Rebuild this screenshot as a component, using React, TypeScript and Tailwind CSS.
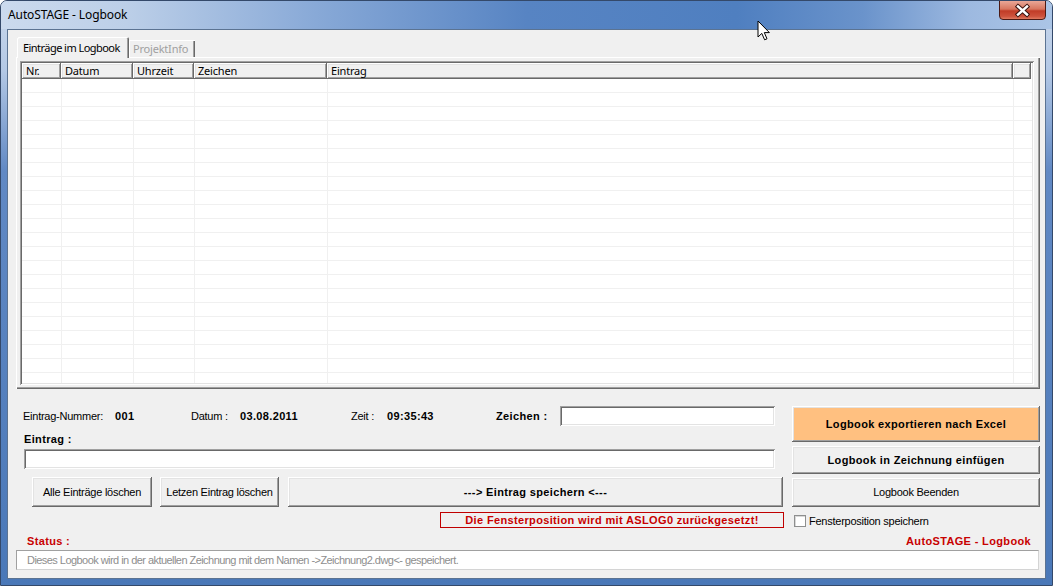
import React from 'react';

// classic 3D borders
const raised =
  'shadow-[inset_-1px_-1px_0_#696969,inset_1px_1px_0_#ffffff,inset_-2px_-2px_0_#a0a0a0,inset_2px_2px_0_#e3e3e3]';
const sunken =
  'shadow-[inset_1px_1px_0_#a0a0a0,inset_-1px_-1px_0_#ffffff,inset_2px_2px_0_#696969,inset_-2px_-2px_0_#e3e3e3]';
const ui = "font-['Liberation_Sans',Arial,sans-serif] text-[11px] leading-[13px] tracking-[-0.25px]";
const uiBold = "font-['Liberation_Sans',Arial,sans-serif] text-[11px] leading-[13px] font-bold tracking-[0.35px]";
const segoe = "font-['Noto_Sans','DejaVu_Sans',sans-serif] text-[11px] leading-[14px] tracking-[-0.2px]";

const columns = [
  { label: 'Nr.', w: 'w-[39px]' },
  { label: 'Datum', w: 'w-[72px]' },
  { label: 'Uhrzeit', w: 'w-[61px]' },
  { label: 'Zeichen', w: 'w-[133px]' },
  { label: 'Eintrag', w: 'w-[686px]' },
  { label: '', w: 'w-[18px]' },
];

const rows = Array.from({ length: 22 }, (_, i) => i);

function Button({ className, children }: { className: string; children: React.ReactNode }) {
  return (
    <div className={`flex items-center justify-center bg-[#f0f0f0] text-black ${raised} ${className}`}>
      {children}
    </div>
  );
}

function ListView() {
  return (
    <div className={`w-[1014px] h-[324px] p-[2px] bg-white ${sunken}`}>
      <div className="flex h-[16px]">
        {columns.map((c, i) => (
          <div
            key={i}
            className={`${c.w} shrink-0 bg-[#f0f0f0] pl-[4px] flex items-center text-black ${segoe} ${raised}`}
          >
            {c.label}
          </div>
        ))}
      </div>
      <div className="h-[304px] overflow-hidden">
        {rows.map((r) => (
          <div key={r} className="flex h-[14px] border-b border-[#f0f0f0]">
            {columns.map((c, i) => (
              <div key={i} className={`${c.w} shrink-0 ${i > 0 ? 'border-l border-[#f0f0f0]' : ''}`} />
            ))}
          </div>
        ))}
      </div>
    </div>
  );
}

export default function App() {
  return (
    <div className="relative w-[1053px] h-[586px] overflow-hidden rounded-t-[7px] border border-[#34496a] bg-[linear-gradient(180deg,#cbd9ec_0px,#b3c8e5_70px,#6189c4_170px,#4a78b8_100%)]">
      {/* title bar */}
      <div className="flex h-[28px] bg-[linear-gradient(90deg,#cbdaee_0%,#bccfe8_12%,#88a9d7_30%,#5784c3_50%,#4f7fc0_70%,#6a93cb_82%,#9db9e0_92%,#abc5e6_100%)]">
        <span className="self-center ml-[7px] -mt-[1px] font-['Noto_Sans','DejaVu_Sans',sans-serif] text-[12px] tracking-[-0.1px] text-black">
          AutoSTAGE - Logbook
        </span>
        <div className="ml-auto mr-[6px] -mt-[1px] w-[47px] h-[20px] rounded-b-[4px] border border-[#4b1a14] bg-[linear-gradient(180deg,#e9a797_0%,#d7765f_45%,#c13c27_55%,#cd523c_85%,#e07a60_100%)]">
          <svg width="45" height="19" viewBox="0 0 45 19">
            <path d="M18 5.5 L27 13.5 M27 5.5 L18 13.5" stroke="#3a1410" strokeWidth="4.4" strokeLinecap="square" />
            <path d="M18 5.5 L27 13.5 M27 5.5 L18 13.5" stroke="#ffffff" strokeWidth="2.4" strokeLinecap="square" />
          </svg>
        </div>
      </div>

      {/* client area */}
      <div className="ml-[6px] w-[1039px] h-[550px] border border-[#5b7392] bg-[#f0f0f0]">
        {/* tabs */}
        <div className="ml-[9px] mt-[7px] flex items-end h-[20px]">
          <div
            className={`relative z-10 -mb-[1px] w-[112px] h-[21px] pl-[6px] flex items-center bg-[#f0f0f0] rounded-t-[2px] shadow-[inset_1px_1px_0_#ffffff,inset_-1px_0_0_#696969,inset_-2px_0_0_#a0a0a0] text-black ${segoe} tracking-[-0.55px]`}
          >
            Einträge im Logbook
          </div>
          <div
            className={`w-[66px] h-[17px] pl-[4px] flex items-center bg-[#f0f0f0] shadow-[inset_1px_1px_0_#ffffff,inset_-1px_0_0_#696969,inset_-2px_0_0_#a0a0a0] text-[#a0a0a0] ${segoe}`}
          >
            ProjektInfo
          </div>
        </div>
        <div className="ml-[8px] w-[1024px] h-[332px] p-[4px] shadow-[inset_1px_1px_0_#ffffff,inset_-1px_-1px_0_#696969,inset_-2px_-2px_0_#a0a0a0]">
          <ListView />
        </div>

        {/* form area */}
        <div className="ml-[15px] mt-[17px] flex">
          <div className="w-[761px]">
            <div className={`flex items-center h-[20px] text-black ${ui}`}>
              <span className="w-[92px]">Eintrag-Nummer:</span>
              <span className={`w-[76px] ${uiBold}`}>001</span>
              <span className="w-[49px]">Datum :</span>
              <span className={`w-[111px] ${uiBold}`}>03.08.2011</span>
              <span className="w-[36px]">Zeit :</span>
              <span className={`w-[109px] ${uiBold}`}>09:35:43</span>
              <span className={`w-[64px] ${uiBold}`}>Zeichen :</span>
              <div className={`w-[215px] h-[20px] bg-white ${sunken}`} />
            </div>
            <div className={`ml-[1px] mt-[6px] h-[14px] flex items-center text-black ${uiBold}`}>Eintrag :</div>
            <div className={`ml-[1px] mt-[3px] w-[751px] h-[20px] bg-white ${sunken}`} />
            <div className={`mt-[8px] flex ${ui}`}>
              <Button className="ml-[9px] w-[120px] h-[30px]">Alle Einträge löschen</Button>
              <Button className="ml-[8px] w-[119px] h-[30px]">Letzen Eintrag löschen</Button>
              <Button className={`ml-[9px] w-[495px] h-[30px] ${uiBold}`}>---&gt; Eintrag speichern &lt;---</Button>
            </div>
            <div
              className={`ml-[417px] mt-[5px] w-[344px] h-[16px] border border-[#c00000] flex items-center justify-center text-[#c80000] ${uiBold}`}
            >
              Die Fensterposition wird mit ASLOG0 zurückgesetzt!
            </div>
          </div>

          <div className="ml-[8px] w-[248px]">
            <Button className={`h-[36px] bg-[#ffc080] ${uiBold}`}>Logbook exportieren nach Excel</Button>
            <Button className={`mt-[4px] h-[28px] ${uiBold}`}>Logbook in Zeichnung einfügen</Button>
            <Button className={`mt-[4px] h-[29px] ${ui}`}>Logbook Beenden</Button>
            <div className={`mt-[8px] ml-[2px] flex items-center h-[12px] text-black ${ui}`}>
              <div className="w-[12px] h-[12px] bg-white border border-[#8e8f8f] shadow-[inset_1px_1px_0_#d8d8d8]" />
              <span className="ml-[3px]">Fensterposition speichern</span>
            </div>
          </div>
        </div>

        {/* status */}
        <div className={`ml-[19px] mr-[14px] mt-[6px] h-[14px] flex items-center justify-between text-[#c80000] ${uiBold}`}>
          <span>Status :</span>
          <span>AutoSTAGE - Logbook</span>
        </div>
        <div
          className={`ml-[8px] mt-[2px] w-[1023px] h-[20px] pl-[10px] flex items-center bg-white border border-[#a0a0a0] border-b-[#d4d4d4] border-r-[#d4d4d4] text-[#8e8e8e] ${ui} tracking-[-0.55px]`}
        >
          Dieses Logbook wird in der aktuellen Zeichnung mit dem Namen -&gt;Zeichnung2.dwg&lt;- gespeichert.
        </div>
      </div>

      {/* mouse pointer */}
      <svg className="absolute left-[756px] top-[19px]" width="14" height="22" viewBox="0 0 14 22">
        <path
          d="M1 1 L1 17 L4.8 13.4 L7.6 19.8 L10 18.8 L7.3 12.6 L12.4 12.6 Z"
          fill="#ffffff"
          stroke="#000000"
          strokeWidth="1"
          strokeLinejoin="miter"
        />
      </svg>
    </div>
  );
}
